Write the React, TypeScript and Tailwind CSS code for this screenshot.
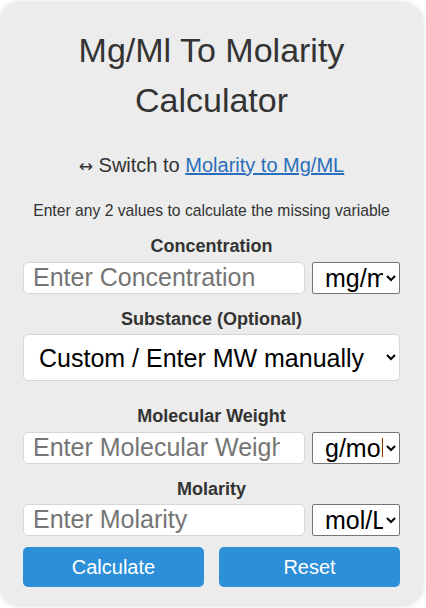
import { useState } from "react"

const inputCls =
  "min-w-0 flex-1 h-[32px] rounded-[5px] border border-[#d6d6d6] bg-white pl-[9px] pr-[24px] text-[25px] text-black placeholder:text-[#757575] outline-none"
const unitCls =
  "w-[88px] h-[32px] shrink-0 rounded-[2px] border border-[#767676] bg-white pl-[8px] pr-0 text-[25px] text-black"

export default function App() {
  const [conc, setConc] = useState("")
  const [mw, setMw] = useState("")
  const [molarity, setMolarity] = useState("")

  return (
    <div className="min-h-screen bg-white font-['Liberation_Sans',Arial,sans-serif]">
      <div className="mt-[3px] w-[422px] rounded-[20px] bg-[#ebeceb] pt-[22px] pb-[18px] pl-[23px] pr-[22px] text-[#333] shadow-[0_0_6px_rgba(0,0,0,0.18)]">
        <h1 className="text-center text-[34px] leading-[50px] font-normal">Mg/Ml To Molarity Calculator</h1>

        <p className="mt-[28px] text-center text-[20px] leading-[24px]">
          <span className="font-['DejaVu_Sans',sans-serif] text-[17px]">↔</span> Switch to{" "}
          <a href="#" className="text-[#2a6ebb] underline">
            Molarity to Mg/ML
          </a>
        </p>

        <p className="mt-[23px] text-center text-[15.7px] leading-[20px]">
          Enter any 2 values to calculate the missing variable
        </p>

        <label className="mt-[15px] block text-center text-[18px] leading-[20px] font-bold">Concentration</label>
        <div className="mt-[6px] flex gap-[7px]">
          <input className={inputCls} placeholder="Enter Concentration" value={conc} onChange={(e) => setConc(e.target.value)} />
          <select className={unitCls} defaultValue="mgml">
            <option value="mgml">mg/mL</option>
            <option value="gl">g/L</option>
          </select>
        </div>

        <label className="mt-[15px] block text-center text-[18px] leading-[20px] font-bold">Substance (Optional)</label>
        <select
          className="mt-[5px] block h-[47px] w-full rounded-[5px] border border-[#d6d6d6] bg-white pl-[11px] pr-[8px] text-[25px] text-black"
          defaultValue="custom"
        >
          <option value="custom">Custom / Enter MW manually</option>
          <option value="nacl">Sodium chloride (NaCl)</option>
        </select>

        <label className="mt-[25px] block text-center text-[18px] leading-[20px] font-bold">Molecular Weight</label>
        <div className="mt-[6px] flex gap-[7px]">
          <input className={inputCls} placeholder="Enter Molecular Weight" value={mw} onChange={(e) => setMw(e.target.value)} />
          <select className={unitCls} defaultValue="gmol">
            <option value="gmol">g/mol</option>
            <option value="kgmol">kg/mol</option>
          </select>
        </div>

        <label className="mt-[15px] block text-center text-[18px] leading-[20px] font-bold">Molarity</label>
        <div className="mt-[5px] flex gap-[7px]">
          <input className={inputCls} placeholder="Enter Molarity" value={molarity} onChange={(e) => setMolarity(e.target.value)} />
          <select className={unitCls} defaultValue="moll">
            <option value="moll">mol/L</option>
            <option value="mmoll">mmol/L</option>
          </select>
        </div>

        <div className="mt-[11px] flex gap-[15px]">
          <button className="h-[40px] flex-1 rounded-[5px] bg-[#2d8fd8] text-[20px] text-white">Calculate</button>
          <button
            className="h-[40px] flex-1 rounded-[5px] bg-[#2d8fd8] text-[20px] text-white"
            onClick={() => {
              setConc("")
              setMw("")
              setMolarity("")
            }}
          >
            Reset
          </button>
        </div>
      </div>
    </div>
  )
}
